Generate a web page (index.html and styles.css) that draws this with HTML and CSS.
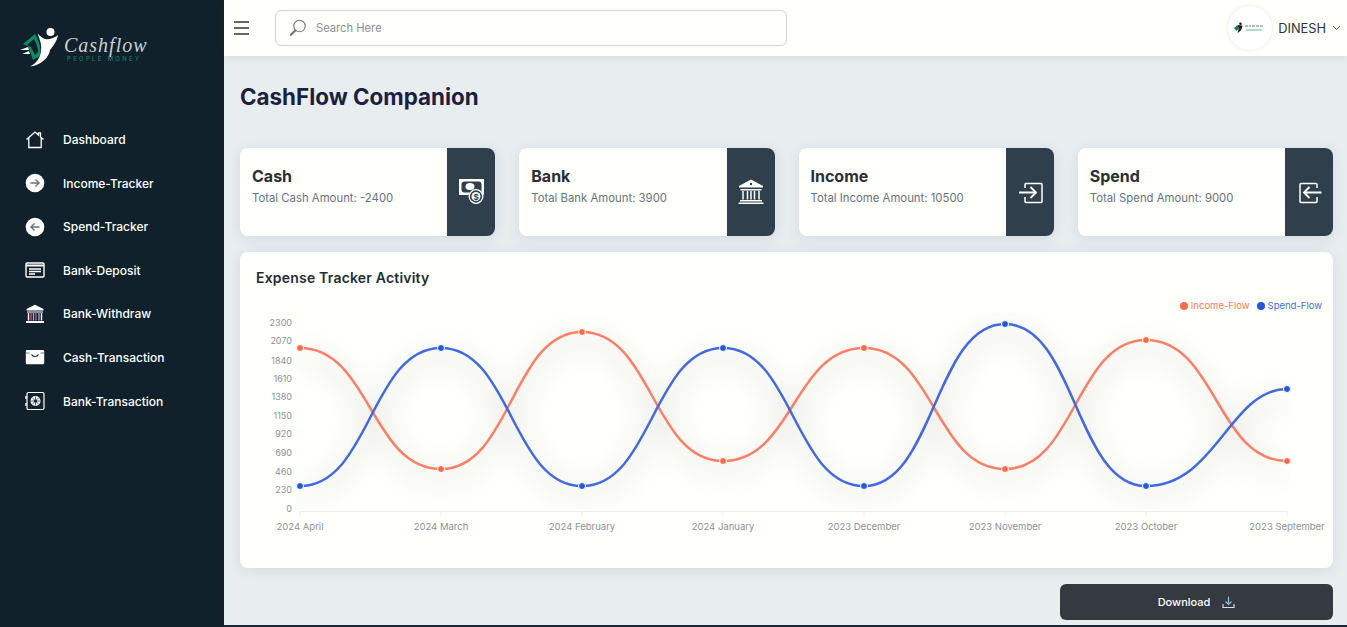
FILE: index.html
```html
<!DOCTYPE html>
<html lang="en">
<head>
  <meta charset="UTF-8" />
  <meta name="viewport" content="width=device-width, initial-scale=1.0" />
  <title>CashFlow Companion</title>
  <link rel="stylesheet" href="styles.css">
</head>
<body>
  <div class="app">
    <aside class="sidebar">
      <div class="logo">
        <svg class="logo-mark" width="42" height="42" viewBox="0 0 42 42">
          <path d="M16 8L4 18l5 2 5 14 7-4c2-6-1-15-5-22z" fill="#0d8a66"/>
          <path d="M15 13l-7 6 4 2 4 8 3-3c0-5-2-9-4-13z" fill="#11212b"/>
          <path d="M1 24l8-3 1 3zM3 28l7-3 1 3z" fill="#fff"/>
          <circle cx="31.500" cy="6" r="4" fill="#fff"/>
          <path d="M18.500 7.500c3 3 6 5.500 9 5.800 4 .2 8.500-1.800 11.500-4.300-.5 5-4 10-8 15-1 7-8 15-20 16.500 6-3 10-8 11-15 1-6-1-12-3.500-18z" fill="#fff"/>
        </svg>
        <div class="logo-text">
          <span class="logo-name">Cashflow</span>
          <span class="logo-sub">PEOPLE MONEY</span>
        </div>
      </div>
      <nav class="nav">
        <a class="nav-item" href="#">
          <svg width="20" height="20" viewBox="0 0 20 20" fill="none" stroke="#fff" stroke-width="1.3"><path d="M1.500 9.500L10 2l3.500 3V2.800h2v4.100l3 2.600M3.800 8v9.500h12.400V8"/></svg>
          Dashboard
        </a>
        <a class="nav-item" href="#">
          <svg width="20" height="20" viewBox="0 0 20 20"><circle cx="10" cy="10" r="9.300" fill="#fff"/><path d="M5.500 10h8.500M10.500 6.500L14 10l-3.500 3.500" fill="none" stroke="#6b7480" stroke-width="1.400"/></svg>
          Income-Tracker
        </a>
        <a class="nav-item" href="#">
          <svg width="20" height="20" viewBox="0 0 20 20"><circle cx="10" cy="10" r="9.300" fill="#fff"/><path d="M14.500 10H6M9.500 6.500L6 10l3.500 3.500" fill="none" stroke="#6b7480" stroke-width="1.400"/></svg>
          Spend-Tracker
        </a>
        <a class="nav-item" href="#">
          <svg width="20" height="20" viewBox="0 0 20 20" fill="none" stroke="#fff"><rect x="1" y="3" width="18" height="14" rx="1" stroke-width="1.400"/><path d="M1 5.500h18" stroke-width="2"/><path d="M4 9h12M4 11.500h12M4 14h6" stroke-width="1.300"/></svg>
          Bank-Deposit
        </a>
        <a class="nav-item" href="#">
          <svg width="20" height="20" viewBox="0 0 20 20"><path d="M10 .8L18.500 5v1.500h-17V5z" fill="#fff"/><path d="M2 7.500h16v1H2zM1 17h18v2H1z" fill="#fff"/><path d="M3.500 9v7.500M16.500 9v7.500" stroke="#fff" stroke-width="1.400"/><path d="M6 9v7.500M11 9v7.500" stroke="#e05a6a" stroke-width="1.300"/><path d="M8.500 9v7.500M14 9v7.500" stroke="#7fb4ee" stroke-width="1.300"/></svg>
          Bank-Withdraw
        </a>
        <a class="nav-item" href="#">
          <svg width="20" height="20" viewBox="0 0 20 20"><path d="M2 3h16a1.200 1.200 0 0 1 1.200 1.200V16a1.200 1.200 0 0 1-1.200 1.200H2A1.200 1.200 0 0 1 .8 16V4.200A1.200 1.200 0 0 1 2 3z" fill="#fff"/><path d="M6.500 7.500c1 1.500 2 2 3.500 2s2.500-.5 3.500-2" fill="none" stroke="#11212b" stroke-width="1.200"/><path d="M.8 6h3.600M15.600 6h3.600" stroke="#11212b" stroke-width=".6"/></svg>
          Cash-Transaction
        </a>
        <a class="nav-item" href="#">
          <svg width="20" height="20" viewBox="0 0 20 20" fill="none" stroke="#fff"><rect x="2" y="1.500" width="17" height="17" rx="1.500" stroke-width="1.200"/><path d="M1 5v3M1 12v3" stroke-width="1.400"/><circle cx="10.500" cy="10" r="5" fill="#fff" stroke="none"/><circle cx="10.500" cy="10" r="1.500" fill="#11212b" stroke="none"/><path d="M10.500 5.500v9M6 10h9M7.300 6.800l6.400 6.400M13.700 6.800l-6.400 6.400" stroke="#11212b" stroke-width=".7"/></svg>
          Bank-Transaction
        </a>
      </nav>
    </aside>

    <div class="main">
      <header class="topbar">
        <button class="menu-btn" aria-label="Menu">
          <span></span><span></span><span></span>
        </button>
        <div class="search">
          <svg width="18" height="18" viewBox="0 0 18 18" fill="none" stroke="#777"><circle cx="10.500" cy="7" r="5.700" stroke-width="1.100"/><path d="M6.500 11.200L1.800 15.800" stroke-width="2.200" stroke-linecap="round"/></svg>
          <span>Search Here</span>
        </div>
        <div class="user">
          <div class="avatar">
            <svg width="32" height="12" viewBox="0 0 32 12">
              <circle cx="6.500" cy="1.800" r="1.300" fill="#222"/>
              <path d="M3.500 3l5 .5c-.5 4-2 6-5 7.500 1-2 1.500-5 0-8z" fill="#222"/>
              <path d="M0 6l3.500-3 1 4-2 2z" fill="#0d7f60"/>
              <path d="M11 4h3M15 4h2M18 4h3M22 4h3M26 4h3" stroke="#777" stroke-width="1"/>
              <path d="M12 8h16" stroke="#58c0a0" stroke-width="1"/>
            </svg>
          </div>
          <span class="user-name">DINESH</span>
          <svg width="9" height="6" viewBox="0 0 9 6" fill="none" stroke="#555" stroke-width="1"><path d="M1 1l3.500 3.500L8 1"/></svg>
        </div>
      </header>

      <div class="content">
        <h1 class="page-title">CashFlow Companion</h1>

        <div class="stats">
          <div class="stat-card">
            <div class="stat-body">
              <h3>Cash</h3>
              <p>Total Cash Amount: -2400</p>
            </div>
            <div class="stat-icon">
              <svg width="26" height="26" viewBox="0 0 26 26"><rect x="1" y="0" width="25" height="16" fill="#fff"/><rect x="3.500" y="2.500" width="20" height="11" rx="3" fill="#2f3f4b"/><ellipse cx="12" cy="7.500" rx="4.500" ry="3.500" fill="#fff"/><circle cx="18" cy="17.500" r="7.500" fill="#2f3f4b"/><circle cx="18" cy="17.500" r="6.800" fill="none" stroke="#fff" stroke-width="1.300"/><circle cx="18" cy="17.500" r="4.500" fill="#fff"/><text x="18" y="20.500" text-anchor="middle" class="coin">$</text></svg>
            </div>
          </div>
          <div class="stat-card">
            <div class="stat-body">
              <h3>Bank</h3>
              <p>Total Bank Amount: 3900</p>
            </div>
            <div class="stat-icon">
              <svg width="26" height="26" viewBox="0 0 26 26"><path d="M13 .5L25 7v1.500H1V7z" fill="#fff"/><circle cx="13" cy="5" r="1.200" fill="#2f3f4b"/><path d="M2.500 10h21v1.500h-21zM2 21h22v1.500H2zM.5 23.500h25V25H.5z" fill="#fff"/><path d="M5 12v8.500M9.500 12v8.500M13 12v8.500M16.500 12v8.500M21 12v8.500" stroke="#fff" stroke-width="1.500"/></svg>
            </div>
          </div>
          <div class="stat-card">
            <div class="stat-body">
              <h3>Income</h3>
              <p>Total Income Amount: 10500</p>
            </div>
            <div class="stat-icon">
              <svg width="26" height="26" viewBox="0 0 26 26" fill="none" stroke="#fff" stroke-width="1.500"><path d="M8 9V5.500a1 1 0 0 1 1-1h15a1 1 0 0 1 1 1v17a1 1 0 0 1-1 1H9a1 1 0 0 1-1-1V18"/><path d="M2 13.500h16" stroke-width="2"/><path d="M13.500 8l5.500 5.500-5.500 5.500" stroke-width="1.800"/></svg>
            </div>
          </div>
          <div class="stat-card">
            <div class="stat-body">
              <h3>Spend</h3>
              <p>Total Spend Amount: 9000</p>
            </div>
            <div class="stat-icon">
              <svg width="26" height="26" viewBox="0 0 26 26" fill="none" stroke="#fff" stroke-width="1.500"><path d="M21 9V5.500a1 1 0 0 0-1-1H5a1 1 0 0 0-1 1v17a1 1 0 0 0 1 1h15a1 1 0 0 0 1-1V18"/><path d="M25.500 13.500H9" stroke-width="2"/><path d="M13.500 8L8 13.500l5.500 5.500" stroke-width="1.800"/></svg>
            </div>
          </div>
        </div>

        <section class="chart-card">
          <h2 class="chart-title">Expense Tracker Activity</h2>
          <div class="legend">
            <span class="legend-item income">Income-Flow</span>
            <span class="legend-item spend">Spend-Flow</span>
          </div>
          <svg class="chart" width="1093" height="239" viewBox="240 313 1093 239">
            <defs>
              <filter id="soft" x="-5%" y="-20%" width="110%" height="140%">
                <feGaussianBlur stdDeviation="15"/>
              </filter>
              <clipPath id="plot">
                <rect x="296" y="313" width="995" height="198"/>
              </clipPath>
            </defs>
            <g class="y-labels" text-anchor="end">
              <text x="292" y="326">2300</text>
              <text x="292" y="344">2070</text>
              <text x="292" y="364">1840</text>
              <text x="292" y="382">1610</text>
              <text x="292" y="400">1380</text>
              <text x="292" y="419">1150</text>
              <text x="292" y="437">920</text>
              <text x="292" y="456">690</text>
              <text x="292" y="475">460</text>
              <text x="292" y="493">230</text>
              <text x="292" y="512">0</text>
            </g>
            <path d="M300 511.500H1287M300 511.500v5M441 511.500v5M582 511.500v5M723 511.500v5M864 511.500v5M1005 511.500v5M1146 511.500v5M1287 511.500v5" stroke="#eceeec" fill="none"/>
            <g clip-path="url(#plot)">
              <g fill="none" stroke="#000" stroke-width="7" opacity=".15" filter="url(#soft)" transform="translate(0 8)">
                <path d="M300 348C370 348 371 469 441 469S512 332 582 332 653 461 723 461 794 348 864 348 935 469 1005 469 1076 340 1146 340 1217 461 1287 461"/>
                <path d="M300 486C370 486 371 348 441 348S512 486 582 486 653 348 723 348 794 486 864 486 935 324 1005 324 1076 486 1146 486 1230 389 1287 389"/>
              </g>
            </g>
            <path class="line-income" d="M300 348C370 348 371 469 441 469S512 332 582 332 653 461 723 461 794 348 864 348 935 469 1005 469 1076 340 1146 340 1217 461 1287 461"/>
            <path class="line-spend" d="M300 486C370 486 371 348 441 348S512 486 582 486 653 348 723 348 794 486 864 486 935 324 1005 324 1076 486 1146 486 1230 389 1287 389"/>
            <g class="dots-income">
              <circle cx="300" cy="348" r="3.500"/><circle cx="441" cy="469" r="3.500"/><circle cx="582" cy="332" r="3.500"/><circle cx="723" cy="461" r="3.500"/><circle cx="864" cy="348" r="3.500"/><circle cx="1005" cy="469" r="3.500"/><circle cx="1146" cy="340" r="3.500"/><circle cx="1287" cy="461" r="3.500"/>
            </g>
            <g class="dots-spend">
              <circle cx="300" cy="486" r="3.500"/><circle cx="441" cy="348" r="3.500"/><circle cx="582" cy="486" r="3.500"/><circle cx="723" cy="348" r="3.500"/><circle cx="864" cy="486" r="3.500"/><circle cx="1005" cy="324" r="3.500"/><circle cx="1146" cy="486" r="3.500"/><circle cx="1287" cy="389" r="3.500"/>
            </g>
            <g class="x-labels" text-anchor="middle">
              <text x="300" y="530">2024 April</text>
              <text x="441" y="530">2024 March</text>
              <text x="582" y="530">2024 February</text>
              <text x="723" y="530">2024 January</text>
              <text x="864" y="530">2023 December</text>
              <text x="1005" y="530">2023 November</text>
              <text x="1146" y="530">2023 October</text>
              <text x="1287" y="530">2023 September</text>
            </g>
          </svg>
        </section>

        <div class="actions">
          <button class="download-btn">
            Download
            <svg width="13" height="13" viewBox="0 0 13 13" fill="none" stroke="#fff" stroke-width="1.200"><path d="M1 8v3.500h11V8" stroke="#d8dde2"/><path d="M6.500 .5v8M3.500 5.500l3 3 3-3" stroke="#7cc4f2"/></svg>
          </button>
        </div>
      </div>
    </div>
  </div>
</body>
</html>
```

FILE: styles.css
```css
* {
  box-sizing: border-box;
}

html,
body {
  margin: 0;
  height: 100%;
  overflow: hidden;
}

body {
  background: #1a2636;
  font-family: Inter, "Liberation Sans", sans-serif;
  color: #212b36;
}

.app {
  display: flex;
  height: 625px;
}

/* sidebar */
.sidebar {
  width: 224px;
  height: 627px;
  flex-shrink: 0;
  background: #11212b;
  color: #fff;
}

.logo {
  display: flex;
  align-items: center;
  gap: 3px;
  padding: 26px 0 0 19px;
}

.logo-text {
  display: flex;
  flex-direction: column;
  align-items: flex-start;
  margin-top: 3px;
}

.logo-name {
  font-family: "Liberation Serif", serif;
  font-style: italic;
  font-size: 20px;
  line-height: 20px;
  letter-spacing: 1px;
  color: #c9cfd1;
}

.logo-sub {
  margin-left: 3px;
  font-size: 6px;
  line-height: 8px;
  letter-spacing: 2.300px;
  color: #0f8a68;
}

.nav {
  display: flex;
  flex-direction: column;
  gap: 23.600px;
  margin-top: 61.500px;
  padding-left: 25px;
}

.nav-item {
  display: flex;
  align-items: center;
  gap: 18px;
  height: 20px;
  font-size: 12px;
  font-weight: 500;
  color: #fff;
  text-decoration: none;
}

/* top bar */
.main {
  flex: 1;
  min-width: 0;
  background: #e8edf0;
}

.topbar {
  display: flex;
  align-items: center;
  height: 56px;
  padding: 0 6px 0 10px;
  background: #fffffb;
  box-shadow: 0 1px 8px rgba(60, 70, 80, 0.1);
}

.menu-btn {
  display: flex;
  flex-direction: column;
  gap: 4.800px;
  width: 15px;
  padding: 0;
  background: none;
  border: 0;
}

.menu-btn span {
  height: 1.200px;
  background: #666;
}

.search {
  display: flex;
  align-items: center;
  gap: 9px;
  width: 512px;
  height: 36px;
  margin-left: 26px;
  padding-left: 13px;
  background: #fffffb;
  border: 1px solid #d2d4d0;
  border-radius: 6px;
  font-size: 11.200px;
  color: #8a919a;
}

.user {
  display: flex;
  align-items: center;
  margin-left: auto;
}

.avatar {
  display: flex;
  align-items: center;
  justify-content: center;
  width: 44px;
  height: 44px;
  border-radius: 50%;
  background: #fff;
  box-shadow: 0 0 4px rgba(0, 0, 0, 0.1);
}

.user-name {
  margin: 0 6px 0 6px;
  font-size: 12.800px;
  color: #2c343c;
}

/* content */
.content {
  padding: 0 14px 0 16px;
}

.page-title {
  margin: 0;
  padding-top: 26px;
  height: 92px;
  font-size: 22.400px;
  line-height: 29px;
  font-weight: 700;
  color: #1d1f3f;
}

.stats {
  display: grid;
  grid-template-columns: repeat(4, 1fr);
  gap: 24px;
}

.stat-card {
  display: flex;
  height: 88px;
  background: #fffffb;
  border-radius: 8px;
  box-shadow: 0 2px 14px rgba(60, 80, 100, 0.12);
  overflow: hidden;
}

.stat-body {
  flex: 1;
  padding: 18px 0 0 12px;
}

.stat-body h3 {
  margin: 0;
  font-size: 16px;
  line-height: 20px;
  font-weight: 700;
  color: #2b2f33;
}

.stat-body p {
  margin: 4px 0 0;
  font-size: 11.350px;
  line-height: 16px;
  color: #68727d;
}

.stat-icon {
  display: flex;
  align-items: center;
  justify-content: center;
  width: 48px;
  background: #2f3f4b;
}

.coin {
  font-family: Inter, sans-serif;
  font-size: 8px;
  font-weight: 700;
  fill: #2f3f4b;
}

/* chart */
.chart-card {
  height: 316px;
  margin-top: 16px;
  padding: 16px 16px 0;
  background: #fffffb;
  border-radius: 8px;
  box-shadow: 0 2px 14px rgba(60, 80, 100, 0.12);
}

.chart-title {
  margin: 0;
  font-size: 14px;
  line-height: 20px;
  font-weight: 600;
  letter-spacing: 0.2px;
  color: #1f2d36;
}

.legend {
  display: flex;
  justify-content: flex-end;
  gap: 7px;
  height: 14px;
  margin: 11px -5px 0 0;
  font-size: 9.500px;
  line-height: 14px;
}

.legend-item {
  display: flex;
  align-items: center;
  gap: 3px;
}

.legend-item::before {
  content: "";
  width: 8px;
  height: 8px;
  border-radius: 50%;
}

.income {
  color: #ff7a59;
}

.income::before {
  background: #ff6b4a;
}

.spend {
  color: #3f6ae8;
}

.spend::before {
  background: #2257e0;
}

.chart {
  display: block;
  margin: 0 -16px;
}

.x-labels text {
  font-size: 9.500px;
  fill: #8d9296;
}

.y-labels text {
  font-size: 9px;
  fill: #8d9296;
}

.line-income,
.line-spend {
  fill: none;
  stroke-width: 2.500px;
}

.line-income {
  stroke: #ff7f66;
}

.line-spend {
  stroke: #4169e1;
}

.dots-income circle,
.dots-spend circle {
  stroke: #fffffb;
  stroke-width: 1px;
}

.dots-income circle {
  fill: #ff6b4a;
}

.dots-spend circle {
  fill: #2257e0;
}

.actions {
  display: flex;
  justify-content: flex-end;
  margin-top: 16px;
}

.download-btn {
  display: flex;
  align-items: center;
  justify-content: center;
  gap: 12px;
  width: 273px;
  height: 36px;
  background: #343a40;
  border: 0;
  border-radius: 6px;
  font-family: inherit;
  font-size: 11px;
  font-weight: 500;
  color: #fff;
}
```
